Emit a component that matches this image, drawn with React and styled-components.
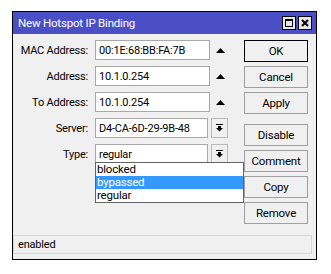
import React from "react";
import styled, { createGlobalStyle } from "styled-components";

const GlobalStyle = createGlobalStyle`
  html, body {
    margin: 0;
    padding: 0;
    background: #ffffff;
  }
  body {
    font-family: Roboto, "Liberation Sans", Arial, sans-serif;
    font-size: 11px;
    letter-spacing: -0.2px;
    color: #000;
  }
`;

const Page = styled.div`
  padding: 11px 0 0 12px;
`;

const Window = styled.div`
  width: 303px;
  height: 247px;
  border: 1px solid #000;
  background: #f0f0f0;
  display: flex;
  flex-direction: column;
`;

const TitleBar = styled.div`
  height: 22px;
  background: #4b4fc6;
  display: flex;
  align-items: center;
  padding: 0 4px 0 5px;
`;

const Title = styled.div`
  flex: 1;
  color: #fff;
  font-size: 11.5px;
`;

const TitleButtons = styled.div`
  display: flex;
  gap: 2px;
`;

const TitleButton = styled.div`
  width: 12px;
  height: 12px;
  border: 1px solid #000;
  background: #e6e6e6;
  display: flex;
  align-items: center;
  justify-content: center;
`;

const Body = styled.div`
  flex: 1;
  display: flex;
  padding-top: 6px;
`;

const Form = styled.div`
  position: relative;
  display: grid;
  grid-template-columns: 75px 122px 20px;
  grid-auto-rows: 20px;
  row-gap: 6px;
  align-content: start;
  width: 217px;
`;

const Label = styled.div`
  text-align: right;
  align-self: center;
  white-space: nowrap;
  grid-column: 1;
`;

const Input = styled.div`
  box-sizing: border-box;
  height: 20px;
  border: 1px solid #a8a8a8;
  background: #fff;
  padding: 0 3px;
  display: flex;
  align-items: center;
  margin-left: 7px;
  margin-right: ${(p) => (p.$narrow ? "2px" : "0")};
  white-space: nowrap;
  overflow: hidden;
`;

const ArrowCell = styled.div`
  display: flex;
  align-items: center;
  justify-content: center;
`;

const SelectButton = styled.div`
  box-sizing: border-box;
  width: 17px;
  height: 20px;
  margin-left: 1px;
  border: 1px solid #b9b9b9;
  background: #f0f0f0;
  display: flex;
  align-items: center;
  justify-content: center;
`;

const DropList = styled.div`
  position: absolute;
  left: 82px;
  top: 122px;
  width: 147px;
  border: 1px solid #646464;
  background: #fff;
  z-index: 2;
`;

const DropItem = styled.div`
  height: 13px;
  line-height: 13px;
  padding-left: 1px;
  font-size: 11.5px;
  background: ${(p) => (p.$active ? "#3399ff" : "#fff")};
  color: ${(p) => (p.$active ? "#fff" : "#000")};
`;

const ButtonColumn = styled.div`
  display: flex;
  flex-direction: column;
  gap: 4px;
  margin-left: 14px;
`;

const Button = styled.div`
  box-sizing: border-box;
  width: 64px;
  height: 22px;
  border: 1px solid ${(p) => (p.$default ? "#000" : "#a0a0a0")};
  background: #f0f0f0;
  display: flex;
  align-items: center;
  justify-content: center;
  font-size: 11.5px;
  margin-top: ${(p) => (p.$gap ? "6px" : "0")};
`;

const StatusBar = styled.div`
  box-sizing: border-box;
  height: 19px;
  margin: 0 4px 5px 0;
  border: 1px solid #d6d6d6;
  background: #f0f0f0;
  padding-left: 4px;
  display: flex;
  align-items: center;
`;

const UpArrow = () => (
  <svg width="9" height="5" viewBox="0 0 9 5">
    <polygon points="0,5 9,5 4.5,0" fill="#000" />
  </svg>
);

const DownArrow = () => (
  <svg width="7" height="8" viewBox="0 0 7 8">
    <rect x="0" y="0" width="7" height="1" fill="#000" />
    <rect x="2" y="2" width="3" height="2" fill="#000" />
    <polygon points="0,4 7,4 3.5,7.5" fill="#000" />
  </svg>
);

const fields = [
  { label: "MAC Address:", value: "00:1E:68:BB:FA:7B", kind: "up" },
  { label: "Address:", value: "10.1.0.254", kind: "up" },
  { label: "To Address:", value: "10.1.0.254", kind: "up" },
  { label: "Server:", value: "D4-CA-6D-29-9B-48", kind: "select" },
  { label: "Type:", value: "regular", kind: "select" },
];

const buttons = [
  { text: "OK", def: true },
  { text: "Cancel" },
  { text: "Apply" },
  { text: "Disable", gap: true },
  { text: "Comment" },
  { text: "Copy" },
  { text: "Remove" },
];

export default function App() {
  return (
    <Page>
      <GlobalStyle />
      <Window>
        <TitleBar>
          <Title>New Hotspot IP Binding</Title>
          <TitleButtons>
            <TitleButton>
              <svg width="8" height="8" viewBox="0 0 8 8">
                <rect x="0.5" y="0.5" width="7" height="7" fill="none" stroke="#000" />
                <rect x="0" y="0" width="8" height="2" fill="#000" />
              </svg>
            </TitleButton>
            <TitleButton>
              <svg width="8" height="8" viewBox="0 0 8 8">
                <path d="M1 1 L7 7 M7 1 L1 7" stroke="#000" strokeWidth="2" />
              </svg>
            </TitleButton>
          </TitleButtons>
        </TitleBar>
        <Body>
          <Form>
            {fields.map((f) => (
              <React.Fragment key={f.label}>
                <Label>{f.label}</Label>
                <Input $narrow={f.kind === "select"}>{f.value}</Input>
                {f.kind === "up" ? (
                  <ArrowCell>
                    <UpArrow />
                  </ArrowCell>
                ) : (
                  <SelectButton>
                    <DownArrow />
                  </SelectButton>
                )}
              </React.Fragment>
            ))}
            <DropList>
              <DropItem>blocked</DropItem>
              <DropItem $active>bypassed</DropItem>
              <DropItem>regular</DropItem>
            </DropList>
          </Form>
          <ButtonColumn>
            {buttons.map((b) => (
              <Button key={b.text} $default={b.def} $gap={b.gap}>
                {b.text}
              </Button>
            ))}
          </ButtonColumn>
        </Body>
        <StatusBar>enabled</StatusBar>
      </Window>
    </Page>
  );
}
